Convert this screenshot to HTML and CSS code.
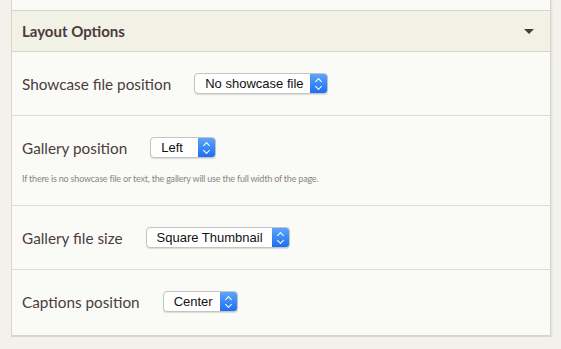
FILE: index.html
```html
<!DOCTYPE html>
<html lang="en">
<head>
    <meta charset="UTF-8">
    <meta name="viewport" content="width=device-width, initial-scale=1.0">
    <title>Layout Options</title>
    <link rel="stylesheet" href="styles.css">
</head>
<body>
    <div class="panel">
        <div class="panel-prev"></div>
        <div class="panel-header">
            <h2>Layout Options</h2>
            <span class="caret"></span>
        </div>

        <div class="row">
            <div class="field">
                <label>Showcase file position</label>
                <div class="select select-showcase"><span>No showcase file</span><i class="arrows"></i></div>
            </div>
        </div>

        <div class="row">
            <div class="field">
                <label>Gallery position</label>
                <div class="select select-position"><span>Left</span><i class="arrows"></i></div>
            </div>
            <p class="note">If there is no showcase file or text, the gallery will use the full width of the page.</p>
        </div>

        <div class="row">
            <div class="field">
                <label>Gallery file size</label>
                <div class="select select-size"><span>Square Thumbnail</span><i class="arrows"></i></div>
            </div>
        </div>

        <div class="row last">
            <div class="field">
                <label>Captions position</label>
                <div class="select select-captions"><span>Center</span><i class="arrows"></i></div>
            </div>
        </div>
    </div>
</body>
</html>
```

FILE: styles.css
```css
body {
    margin: 0;
    padding: 0;
    background-color: #f2f1eb;
    font-family: Lato, "Open Sans", sans-serif;
    color: #4b3d3d;
}

.panel {
    margin-left: 11px;
    width: 538px;
    background-color: #fafaf7;
    border-left: 1px solid #d8d7c6;
    border-right: 1px solid #d8d7c6;
    border-bottom: 2px solid #d8d7c6;
    box-shadow: 1px 1px 2px rgba(0, 0, 0, 0.08);
}

.panel-prev {
    height: 10px;
}

.panel-header {
    display: flex;
    align-items: center;
    justify-content: space-between;
    height: 40px;
    padding: 0 16px 0 10px;
    background-color: #f2f1e6;
    border-top: 1px solid #d8d7c4;
    border-bottom: 1px solid #d8d7c4;
}

.panel-header h2 {
    margin: 0;
    font-size: 15px;
    font-weight: bold;
    color: #4a3a3c;
}

.caret {
    width: 0;
    height: 0;
    border-left: 5px solid transparent;
    border-right: 5px solid transparent;
    border-top: 5px solid #4a3a3c;
}

.row {
    padding: 21px 10px 21px;
    border-bottom: 1px solid #dcdbcc;
}

.row:first-of-type {
    padding-bottom: 22px;
}

.row.last {
    padding-bottom: 23px;
    border-bottom: none;
}

.field {
    display: flex;
    align-items: center;
    gap: 23px;
}

.field label {
    font-size: 15.3px;
    color: #4b3d3d;
}

.select {
    display: flex;
    align-items: stretch;
    box-sizing: border-box;
    height: 21px;
    background-color: #fff;
    border: 1px solid #c4c4c4;
    border-radius: 4px;
    box-shadow: 0 1px 1px rgba(0, 0, 0, 0.12);
    font-family: "Liberation Sans", Arial, sans-serif;
    font-size: 13px;
    color: #111;
    overflow: hidden;
}

.select-showcase { width: 134px; }
.select-position { width: 66px; }
.select-size { width: 144px; }
.select-captions { width: 75px; }

.select span {
    flex: 1;
    padding: 0 0 0 10px;
    line-height: 19px;
    white-space: nowrap;
}

.arrows {
    position: relative;
    width: 17px;
    background: linear-gradient(#5ea4f9, #1c6ff2);
}

.arrows::before,
.arrows::after {
    content: "";
    position: absolute;
    left: 6px;
    width: 4px;
    height: 4px;
    border-left: 1.3px solid #fff;
    border-top: 1.3px solid #fff;
}

.arrows::before {
    top: 5px;
    transform: rotate(45deg);
}

.arrows::after {
    top: 10px;
    transform: rotate(225deg);
}

.note {
    margin: 15px 0 0;
    font-size: 9px;
    letter-spacing: -0.2px;
    color: #8a8682;
}
```
